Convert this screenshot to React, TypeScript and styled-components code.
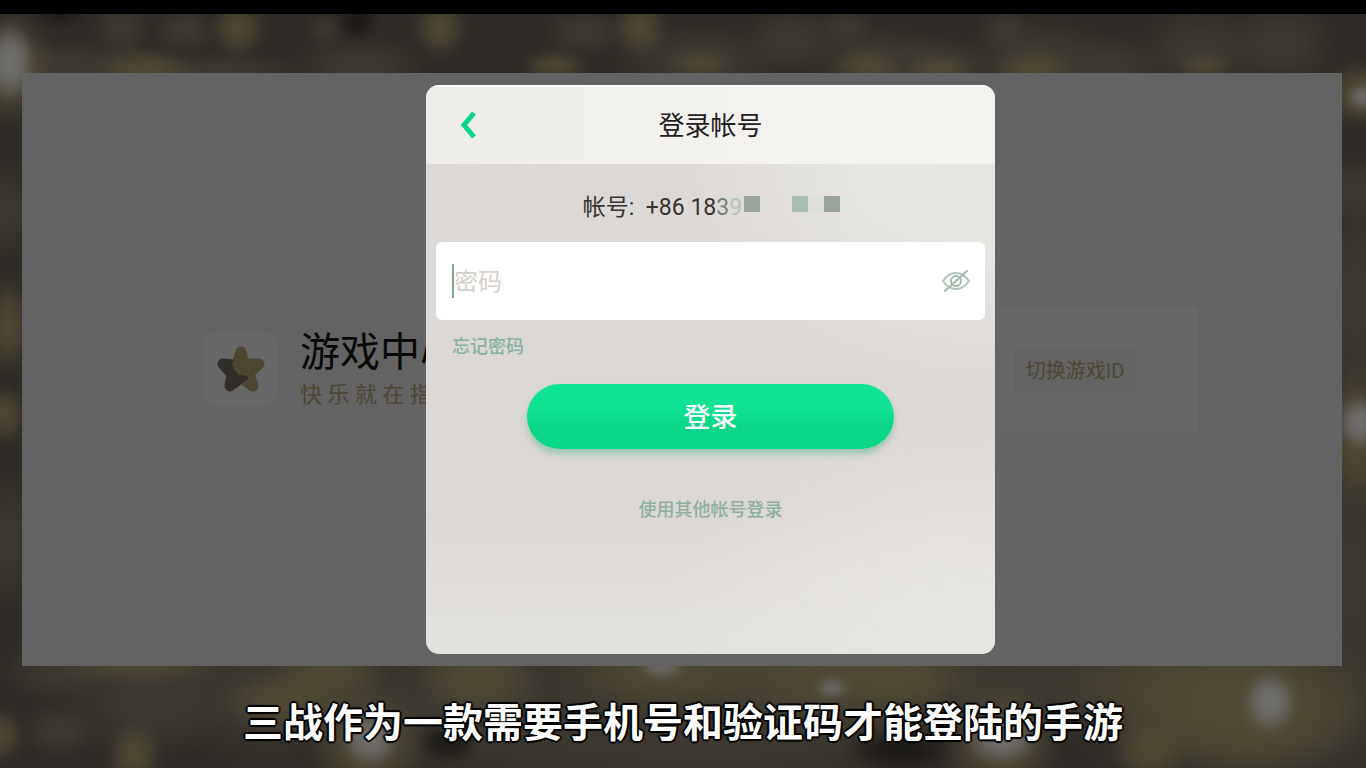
import React from 'react';
import styled, { createGlobalStyle } from 'styled-components';

const Global = createGlobalStyle`
  * { box-sizing: border-box; }
  body {
    margin: 0;
    background: #2e2a25;
    font-family: Roboto, "Noto Sans CJK SC", sans-serif;
  }
  button, input { font: inherit; }
`;

const Page = styled.div`
  position: relative;
  isolation: isolate;
  display: flex;
  flex-direction: column;
  min-height: 100vh;
  overflow: hidden;
`;

const Backdrop = styled.svg`
  position: absolute;
  inset: 0;
  z-index: -1;
  width: 100%;
  height: 100%;
`;

const TopBar = styled.div`
  height: 14px;
  background: #000;
`;

const Stage = styled.main`
  position: relative;
  flex: 1;
  display: flex;
  align-items: center;
  justify-content: space-between;
  margin: 59px 24px 0 22px;
  padding: 12px 144px 12px 182px;
  min-height: 592px;
  background: #636363;
`;

const Game = styled.section`
  display: flex;
  align-items: center;
  gap: 23px;
  white-space: nowrap;
`;

const GameIcon = styled.div`
  flex: none;
  display: grid;
  place-items: center;
  width: 73px;
  height: 74px;
  border-radius: 12px;
  background: #676767;
`;

const GameText = styled.div`
  padding-top: 6px;
`;

const GameName = styled.h1`
  margin: 0;
  font-size: 40px;
  line-height: 44px;
  font-weight: 400;
  color: #080807;
`;

const GameSlogan = styled.p`
  margin: 0;
  font-size: 22px;
  line-height: 40px;
  color: #4c4632;
`;

const SwitchBox = styled.section`
  display: flex;
  align-items: center;
  width: 198px;
  height: 124px;
  padding-left: 13px;
  background: #676767;
`;

const SwitchButton = styled.button`
  width: 124px;
  height: 44px;
  padding: 0;
  border: 0;
  border-radius: 4px;
  background: #636363;
  color: #4c4632;
  font-size: 20px;
`;

const Overlay = styled.div`
  position: absolute;
  inset: 0;
  display: flex;
  align-items: center;
  justify-content: center;
  padding-left: 57px;
`;

const Dialog = styled.section`
  display: flex;
  flex-direction: column;
  width: 569px;
  min-height: 569px;
  border-radius: 13px;
  overflow: hidden;
  background:
    radial-gradient(ellipse 340px 240px at 100% 100%, #e7e5e2 20%, transparent),
    radial-gradient(ellipse 330px 240px at 100% 12%, #e6e5e1 40%, transparent),
    linear-gradient(transparent 75%, #e2e0dd 96%),
    #dcd8d5;
`;

const DialogHeader = styled.header`
  display: grid;
  grid-template-columns: 72px 1fr 72px;
  align-items: center;
  height: 79px;
  border-top: 2px solid #fff;
  background: linear-gradient(90deg, #eeece9, #f3f1ee 40%, #f5f3f0);
`;

const BackButton = styled.button`
  display: grid;
  justify-content: end;
  align-items: center;
  height: 44px;
  padding: 0 21px 2px 0;
  border: 0;
  background: none;
`;

const DialogTitle = styled.h2`
  margin: 0;
  text-align: center;
  font-size: 26px;
  line-height: 40px;
  font-weight: 400;
  color: #22211e;
`;

const Form = styled.form`
  display: flex;
  flex-direction: column;
  align-items: center;
  padding: 28px 10px 0;
`;

const Account = styled.p`
  display: flex;
  align-items: center;
  margin: 0;
  padding-left: 2px;
  height: 32px;
  font-size: 23px;
  line-height: 32px;
  white-space: pre;
  color: #35332f;
`;

const Digit = styled.span<{ $tone: string }>`
  color: ${(p) => p.$tone};
`;

const Mosaic = styled.span`
  display: flex;
  margin-left: 2px;
  padding-bottom: 8px;
`;

const Tile = styled.span<{ $tone: string; $wide?: boolean }>`
  width: ${(p) => (p.$wide ? 32 : 16)}px;
  height: 16px;
  background: ${(p) => p.$tone};
`;

const Field = styled.label`
  display: flex;
  align-items: center;
  align-self: stretch;
  height: 78px;
  margin-top: 18px;
  padding: 0 15px 0 16px;
  border-radius: 6px;
  background: #fff;
`;

const Caret = styled.span`
  width: 2px;
  height: 34px;
  background: #7fa394;
`;

const PasswordInput = styled.input`
  flex: 1;
  min-width: 0;
  height: 44px;
  padding: 2px 0 0;
  border: 0;
  outline: 0;
  background: none;
  font-size: 24px;
  color: #35332f;
  &::placeholder { color: #d6cfcb; opacity: 1; }
`;

const EyeButton = styled.button`
  display: grid;
  padding: 0;
  border: 0;
  background: none;
`;

const TextLink = styled.a<{ $start?: boolean }>`
  align-self: ${(p) => (p.$start ? 'flex-start' : 'center')};
  margin: ${(p) => (p.$start ? '14px 0 0 16px' : '48px 0 0')};
  font-size: 18px;
  line-height: 26px;
  font-weight: 500;
  color: ${(p) => (p.$start ? '#86b09d' : '#8fae9f')};
  text-decoration: none;
`;

const LoginButton = styled.button`
  width: 367px;
  height: 65px;
  margin-top: 24px;
  padding: 0 0 2px;
  border: 0;
  border-radius: 33px;
  background: linear-gradient(#10e494 30%, #0ad688 65%);
  box-shadow: 0 5px 6px rgba(110, 185, 155, 0.6);
  color: #fff;
  font-size: 27px;
  font-weight: 500;
`;

const Caption = styled.p`
  margin: 0;
  height: 102px;
  padding: 24px 0 0;
  text-align: center;
  font-family: "Noto Sans CJK SC", sans-serif;
  font-size: 40px;
  line-height: 60px;
  font-weight: 700;
  color: #fff;
  text-shadow:
    2px 0 1px #000, -2px 0 1px #000, 0 2px 1px #000, 0 -2px 1px #000,
    1px 1px 1px #000, -1px -1px 1px #000, 1px -1px 1px #000, -1px 1px 1px #000;
`;

type Glow = [kind: 'dark' | 'brown' | 'olive' | 'grey', cx: number, cy: number, rx: number, ry: number];

const glowColors = { dark: '#1a1814', brown: '#3e3a31', olive: '#504a35', grey: '#727272' };

const glows: Glow[] = [
  // top strip
  ['brown', 122, 28, 28, 30], ['brown', 185, 30, 32, 24], ['brown', 585, 32, 42, 24],
  ['brown', 360, 66, 70, 30], ['brown', 325, 30, 18, 16], ['brown', 700, 60, 90, 36],
  ['brown', 790, 40, 50, 34], ['brown', 880, 60, 80, 34], ['brown', 845, 28, 30, 22],
  ['brown', 940, 66, 60, 30], ['brown', 1040, 56, 80, 38], ['brown', 1005, 30, 26, 22],
  ['brown', 1110, 66, 60, 32], ['brown', 1200, 50, 64, 46], ['brown', 1280, 44, 60, 44],
  ['brown', 60, 66, 110, 26], ['brown', 220, 72, 90, 20],
  ['olive', 238, 28, 28, 30], ['olive', 440, 28, 28, 30], ['olive', 640, 28, 28, 30],
  ['olive', 145, 72, 54, 26], ['olive', 555, 66, 34, 16], ['olive', 700, 64, 34, 14],
  ['olive', 868, 66, 36, 18], ['olive', 940, 68, 36, 14], ['olive', 1034, 70, 44, 22],
  ['olive', 1205, 66, 28, 12], ['dark', 357, 20, 20, 22], ['dark', 60, 14, 28, 10],
  // side strips
  ['olive', 10, 68, 46, 60], ['grey', 10, 62, 26, 42],
  ['brown', 6, 210, 30, 50], ['olive', 8, 325, 26, 50], ['olive', 4, 415, 24, 30], ['brown', 8, 540, 30, 70],
  ['olive', 1362, 94, 44, 34], ['grey', 1364, 97, 18, 14], ['brown', 1356, 190, 34, 36],
  ['brown', 1356, 300, 40, 120], ['olive', 1358, 440, 44, 84], ['grey', 1360, 422, 24, 28],
  ['brown', 1350, 580, 50, 120],
  // bottom strip
  ['brown', 60, 670, 60, 34], ['brown', 60, 730, 40, 28], ['brown', 150, 700, 90, 60],
  ['brown', 270, 690, 120, 80], ['brown', 480, 700, 200, 90], ['brown', 700, 740, 280, 60],
  ['brown', 820, 690, 220, 70], ['brown', 1040, 680, 160, 50], ['brown', 1260, 710, 200, 110],
  ['olive', 140, 664, 90, 20], ['olive', 134, 756, 28, 36], ['olive', 290, 702, 70, 34],
  ['olive', 330, 672, 60, 30], ['olive', 368, 744, 60, 64], ['olive', 478, 676, 64, 46],
  ['olive', 660, 672, 110, 44], ['olive', 840, 670, 160, 60], ['olive', 1000, 742, 64, 64],
  ['olive', 1220, 690, 170, 70], ['olive', 1250, 720, 120, 60], ['olive', 1150, 750, 40, 34],
  ['olive', 0, 735, 24, 28], ['olive', 900, 678, 60, 34],
  ['grey', 370, 738, 30, 30], ['grey', 1002, 738, 38, 28], ['grey', 1270, 702, 28, 32],
  ['grey', 832, 688, 18, 10], ['grey', 662, 668, 24, 10],
  ['dark', 448, 742, 34, 22], ['dark', 900, 750, 60, 22],
];

function Bokeh() {
  return (
    <Backdrop viewBox="0 0 1366 768" preserveAspectRatio="none" aria-hidden="true">
      <defs>
        {Object.entries(glowColors).map(([kind, color]) => (
          <radialGradient key={kind} id={`glow-${kind}`}>
            <stop offset="0" stopColor={color} />
            <stop offset="0.45" stopColor={color} stopOpacity="0.75" />
            <stop offset="1" stopColor={color} stopOpacity="0" />
          </radialGradient>
        ))}
        <filter id="soften" colorInterpolationFilters="sRGB">
          <feGaussianBlur stdDeviation="5" />
        </filter>
      </defs>
      <g filter="url(#soften)">
        <rect x="-40" y="-40" width="1446" height="848" fill="#2e2a25" />
        {glows.map(([kind, cx, cy, rx, ry], i) => (
          <ellipse key={i} cx={cx} cy={cy} rx={rx} ry={ry} fill={`url(#glow-${kind})`} />
        ))}
      </g>
    </Backdrop>
  );
}

function StarIcon() {
  return (
    <svg width="48" height="50" viewBox="0 0 48 50" strokeLinejoin="round" strokeLinecap="round" aria-hidden="true">
      <path d="M24 7 L27 19 L42 19 L32 28 L36 41 L24 33 L20 20 Z" fill="#4c4632" stroke="#4c4632" strokeWidth="11" />
      <path d="M6 19 L16 20 L20 28 L26 31 L13 41 L15 29 Z" fill="#302c27" stroke="#302c27" strokeWidth="11" />
      <path d="M24 7 L20 20 L24 25 L31 26" fill="none" stroke="#4c4632" strokeWidth="10" />
    </svg>
  );
}

function EyeOffIcon() {
  return (
    <svg width="28" height="24" viewBox="0 0 28 24" fill="none" strokeWidth="2" strokeLinecap="round" aria-hidden="true">
      <path stroke="#b5c2b9" d="M1 12 C5 6 10 4 14 4 C18 4 23 6 27 12 C23 18 18 20 14 20 C10 20 5 18 1 12 Z" />
      <circle stroke="#9dbcab" cx="14" cy="12" r="5" />
      <path stroke="#a9b9ae" d="M3 22 L25 2" />
    </svg>
  );
}

export default function App() {
  return (
    <Page>
      <Global />
      <Bokeh />
      <TopBar />
      <Stage>
        <Game>
          <GameIcon><StarIcon /></GameIcon>
          <GameText>
            <GameName>游戏中心</GameName>
            <GameSlogan>快 乐 就 在 指</GameSlogan>
          </GameText>
        </Game>
        <SwitchBox>
          <SwitchButton type="button">切换游戏ID</SwitchButton>
        </SwitchBox>
        <Overlay>
          <Dialog role="dialog" aria-labelledby="login-title">
            <DialogHeader>
              <BackButton type="button" aria-label="返回">
                <svg width="20" height="30" viewBox="0 0 20 30" fill="none" stroke="#0ad688" strokeWidth="5" aria-hidden="true">
                  <path d="M17 3 L7 15 L17 27" />
                </svg>
              </BackButton>
              <DialogTitle id="login-title">登录帐号</DialogTitle>
            </DialogHeader>
            <Form onSubmit={(e) => e.preventDefault()}>
              <Account>
                <span>帐号:  +86 18</span>
                <Digit $tone="#77807b">3</Digit>
                <Digit $tone="#b3c2b9">9</Digit>
                <Mosaic>
                  <Tile $tone="#98a39e" />
                  <Tile $tone="transparent" $wide />
                  <Tile $tone="#a9bdb2" />
                  <Tile $tone="#e0dedb" />
                  <Tile $tone="#98a39e" />
                </Mosaic>
              </Account>
              <Field>
                <Caret />
                <PasswordInput type="password" placeholder="密码" aria-label="密码" />
                <EyeButton type="button" aria-label="显示密码"><EyeOffIcon /></EyeButton>
              </Field>
              <TextLink href="#forgot" $start>忘记密码</TextLink>
              <LoginButton type="submit">登录</LoginButton>
              <TextLink href="#other">使用其他帐号登录</TextLink>
            </Form>
          </Dialog>
        </Overlay>
      </Stage>
      <Caption>三战作为一款需要手机号和验证码才能登陆的手游</Caption>
    </Page>
  );
}
